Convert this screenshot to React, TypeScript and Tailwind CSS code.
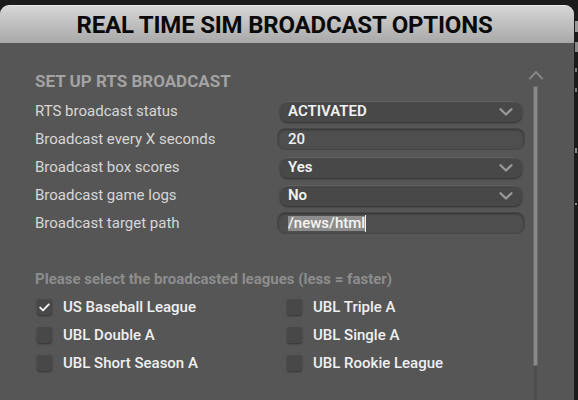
import React from "react";

const font = { fontFamily: "Roboto, 'Liberation Sans', sans-serif" };

function Chevron() {
  return (
    <svg width="14" height="8" viewBox="0 0 14 8" className="shrink-0">
      <polyline points="1.5,1.2 7,6.5 12.5,1.2" fill="none" stroke="#9a9a9a" strokeWidth="2.2" strokeLinecap="round" strokeLinejoin="round" />
    </svg>
  );
}

function Dropdown({ value }: { value: string }) {
  return (
    <div className="mx-[3px] h-[21px] rounded-[8px] bg-[#484848] border-t border-t-[#626262] shadow-[0_1px_2px_rgba(0,0,0,0.45)] flex items-center justify-between pl-[8px] pr-[9px]">
      <span className="text-[15px] font-semibold text-[#f2f2f2] leading-none">{value}</span>
      <Chevron />
    </div>
  );
}

function Input({ children }: { children: React.ReactNode }) {
  return (
    <div className="h-[22px] rounded-[8px] bg-[#4e4e4e] border border-[#474747] shadow-[inset_0_1px_2px_rgba(0,0,0,0.35)] flex items-center pl-[10px]">
      {children}
    </div>
  );
}

function Row({ label, children }: { label: string; children: React.ReactNode }) {
  return (
    <div className="h-[28px] flex items-center">
      <div className="w-[242px] text-[15px] text-[#d6d6d6] leading-none">{label}</div>
      <div className="w-[248px]">{children}</div>
    </div>
  );
}

function Check({ checked, label }: { checked?: boolean; label: string }) {
  return (
    <div className="h-[28px] flex items-center">
      <div className="w-[15px] h-[16px] rounded-[3px] bg-[#484848] shadow-[0_1px_2px_rgba(0,0,0,0.4)] flex items-center justify-center">
        {checked && (
          <svg width="11" height="9" viewBox="0 0 11 9">
            <polyline points="1.2,4.6 4,7.4 9.8,1.4" fill="none" stroke="#f4f4f4" strokeWidth="1.9" strokeLinecap="round" strokeLinejoin="round" />
          </svg>
        )}
      </div>
      <span className="ml-[11px] text-[15px] font-medium text-[#f0f0f0] leading-none">{label}</span>
    </div>
  );
}

export default function App() {
  return (
    <div className="w-[578px] h-[400px] bg-[#1b1b1b] pt-[5px] relative overflow-hidden" style={font}>
      <div className="absolute right-0 top-[21px] w-[3px] h-[11px] bg-[#9a9a9a]" />
      <div className="absolute right-0 top-[42px] w-[3px] h-[10px] bg-[#8a8a8a]" />
      <div className="absolute right-[1px] top-[68px] w-[2px] h-[4px] bg-[#777]" />
      <div className="absolute right-[1px] top-[88px] w-[2px] h-[4px] bg-[#777]" />
      <div className="absolute right-[1px] top-[148px] w-[2px] h-[5px] bg-[#888]" />
      <div className="absolute right-[1px] top-[203px] w-[2px] h-[2px] bg-[#888]" />
      <div className="w-[574px] h-[395px] rounded-t-[9px] bg-[#565656] flex flex-col overflow-hidden">
        <div className="h-[38px] shrink-0 bg-gradient-to-b from-[#d6d6d6] to-[#a8a8a8] border-t border-t-[#e8e8e8] flex items-center justify-center">
          <span className="text-[24px] font-bold text-[#0a0a0a] leading-none tracking-[-0.2px] -ml-[5px]">REAL TIME SIM BROADCAST OPTIONS</span>
        </div>
        <div className="flex flex-1">
          <div className="flex-1 pl-[35px] pt-[28px]">
            <div className="h-[20px] flex items-center text-[17px] font-bold text-[#a3a3a3] leading-none">SET UP RTS BROADCAST</div>
            <div className="mt-[6px]">
              <Row label="RTS broadcast status"><Dropdown value="ACTIVATED" /></Row>
              <Row label="Broadcast every X seconds">
                <Input><span className="text-[15px] font-medium text-[#f0f0f0] leading-none">20</span></Input>
              </Row>
              <Row label="Broadcast box scores"><Dropdown value="Yes" /></Row>
              <Row label="Broadcast game logs"><Dropdown value="No" /></Row>
              <Row label="Broadcast target path">
                <Input>
                  <span className="text-[15px] font-medium text-[#f4f4f4] leading-[15px] bg-[#8c8c8c]">/news/html</span>
                  <span className="w-[1px] h-[17px] bg-[#f4f4f4]" />
                </Input>
              </Row>
            </div>
            <div className="mt-[32px] h-[20px] flex items-center text-[15px] font-bold text-[#8d8d8d] leading-none">Please select the broadcasted leagues (less = faster)</div>
            <div className="mt-[4px] grid grid-cols-[250px_200px] ml-[2px]">
              <Check checked label="US Baseball League" />
              <Check label="UBL Triple A" />
              <Check label="UBL Double A" />
              <Check label="UBL Single A" />
              <Check label="UBL Short Season A" />
              <Check label="UBL Rookie League" />
            </div>
          </div>
          <div className="w-[46px] shrink-0 flex flex-col">
            <div className="h-[22px]" />
            <svg width="16" height="10" viewBox="0 0 16 10" className="mt-[5px]">
              <polyline points="2,8.5 8,2 14,8.5" fill="none" stroke="#858585" strokeWidth="2" strokeLinecap="round" strokeLinejoin="round" />
            </svg>
            <div className="ml-[5px] mt-[6px] w-[5px] h-[280px] bg-[#8a8a8a] border border-[#6a6a6a] rounded-[1px]" />
            <div className="ml-[6px] w-[3px] flex-1 bg-[#4d4d4d]" />
          </div>
        </div>
      </div>
    </div>
  );
}
